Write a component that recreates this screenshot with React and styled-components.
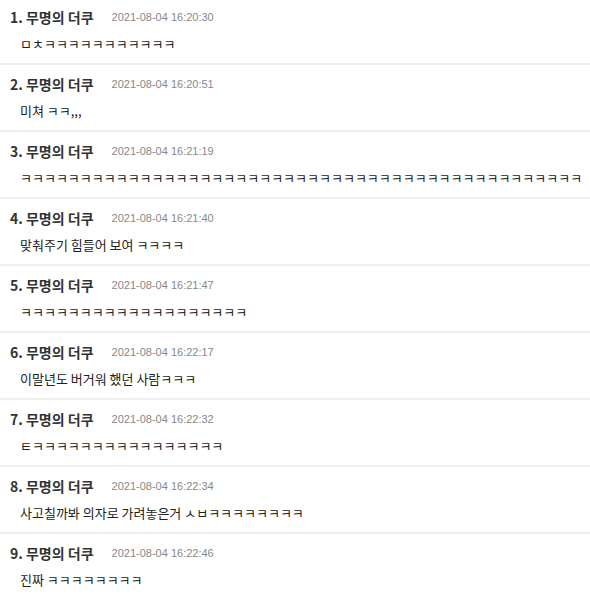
import React from 'react';
import styled, { createGlobalStyle } from 'styled-components';

const GlobalStyle = createGlobalStyle`
    body {
        margin: 0;
        background: #fff;
        font-family: "Noto Sans CJK KR", "Liberation Sans", sans-serif;
    }
`

const List = styled.ul`
    list-style: none;
    margin: 0;
    padding: 0;
    width: 590px;
`

const Item = styled.li`
    padding: 11px 0 11px;
    border-bottom: 2px solid #eeeeee;

    &:first-child {
        padding-top: 9px;
    }
`

const Header = styled.div`
    display: flex;
    align-items: center;
    height: 16px;
    padding-left: 10px;
`

const Name = styled.span`
    font-size: 14px;
    font-weight: 700;
    color: #333;
    white-space: nowrap;
`

const Time = styled.span`
    margin-left: 18px;
    font-family: "Liberation Sans", Arial, sans-serif;
    font-size: 11px;
    color: #888;
`

const Body = styled.p`
    margin: 11px 0 0;
    padding-left: 20px;
    height: 16px;
    line-height: 16px;
    font-size: 13px;
    color: #222;
    white-space: nowrap;
`

const k = n => 'ㅋ'.repeat(n)

const comments = [
    { time: '2021-08-04 16:20:30', text: 'ㅁㅊ' + k(11) },
    { time: '2021-08-04 16:20:51', text: '미쳐 ㅋㅋ,,,' },
    { time: '2021-08-04 16:21:19', text: k(47) },
    { time: '2021-08-04 16:21:40', text: '맞춰주기 힘들어 보여 ' + k(4) },
    { time: '2021-08-04 16:21:47', text: k(19) },
    { time: '2021-08-04 16:22:17', text: '이말년도 버거워 했던 사람' + k(3) },
    { time: '2021-08-04 16:22:32', text: 'ㅌ' + k(16) },
    { time: '2021-08-04 16:22:34', text: '사고칠까봐 의자로 가려놓은거 ㅅㅂ' + k(8) },
    { time: '2021-08-04 16:22:46', text: '진짜 ' + k(8) },
]

const App = () => {
    return (
        <>
            <GlobalStyle />
            <List>
                {comments.map((c, i) => (
                    <Item key={i}>
                        <Header>
                            <Name>{i + 1}. 무명의 더쿠</Name>
                            <Time>{c.time}</Time>
                        </Header>
                        <Body>{c.text}</Body>
                    </Item>
                ))}
            </List>
        </>
    );
};

export default App;
